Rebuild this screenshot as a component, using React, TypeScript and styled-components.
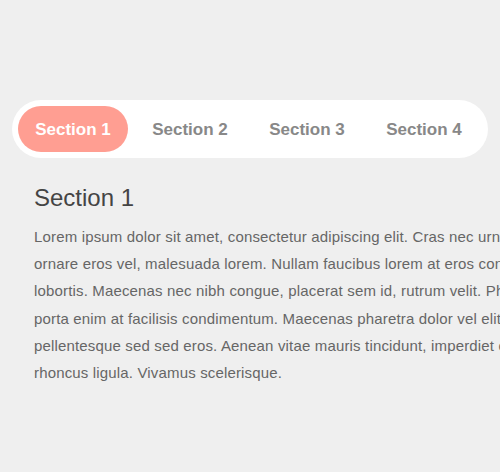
import React, { useState } from "react"
import styled, { createGlobalStyle } from "styled-components"

const GlobalStyle = createGlobalStyle`
  body {
    margin: 0;
    background: #efefef;
    font-family: "Liberation Sans", Arial, sans-serif;
    overflow: hidden;
  }
`

const TABS = ["Section 1", "Section 2", "Section 3", "Section 4"]

const LINES = [
  "Lorem ipsum dolor sit amet, consectetur adipiscing elit. Cras nec urna",
  "ornare eros vel, malesuada lorem. Nullam faucibus lorem at eros consequat",
  "lobortis. Maecenas nec nibh congue, placerat sem id, rutrum velit. Phasellus",
  "porta enim at facilisis condimentum. Maecenas pharetra dolor vel elit",
  "pellentesque sed sed eros. Aenean vitae mauris tincidunt, imperdiet orci",
  "rhoncus ligula. Vivamus scelerisque.",
]

const App: React.FC = () => {
  const [active, setActive] = useState(0)

  return (
    <>
      <GlobalStyle />
      <Page>
        <TabBar>
          {TABS.map((tab, i) => (
            <Tab key={tab} $active={i === active} onClick={() => setActive(i)}>
              {tab}
            </Tab>
          ))}
        </TabBar>
        <Panel>
          <Title>{TABS[active]}</Title>
          <Text>
            {LINES.map(line => (
              <Line key={line}>{line}</Line>
            ))}
          </Text>
        </Panel>
      </Page>
    </>
  )
}

const Page = styled.div`
  width: 476px;
  padding: 100px 0 0 12px;
`

const TabBar = styled.nav`
  display: flex;
  gap: 7px;
  height: 58px;
  box-sizing: border-box;
  padding: 6px 6px;
  background: #fff;
  border-radius: 29px;
`

const Tab = styled.button<{ $active: boolean }>`
  width: 110px;
  height: 46px;
  border: none;
  border-radius: 23px;
  padding: 1px 0 0;
  cursor: pointer;
  font-family: inherit;
  font-size: 17px;
  font-weight: bold;
  color: ${({ $active }) => ($active ? "#fff" : "#888")};
  background: ${({ $active }) => ($active ? "#ff9e92" : "transparent")};

  &:focus {
    outline: none;
  }
`

const Panel = styled.section`
  padding: 25px 0 0 22px;
`

const Title = styled.h2`
  margin: 0 0 10px;
  font-size: 24px;
  font-weight: normal;
  line-height: 30px;
  color: #444;
`

const Text = styled.p`
  margin: 0;
  font-size: 15px;
  line-height: 27.2px;
  letter-spacing: 0.16px;
  color: #666;
  white-space: nowrap;
`

const Line = styled.span`
  display: block;
`

export default App
